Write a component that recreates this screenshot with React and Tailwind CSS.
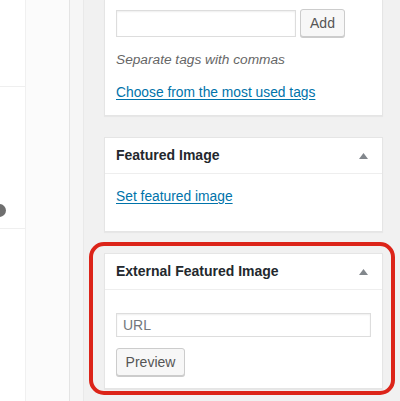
import React from "react";

function Arrow() {
  return (
    <svg width="9" height="6" viewBox="0 0 9 6" className="block">
      <path d="M4.5 0 L9 6 L0 6 Z" fill="#82878c" />
    </svg>
  );
}

export default function App() {
  return (
    <div
      className="relative w-[400px] h-[401px] overflow-hidden flex bg-[#f1f1f1] text-[14px] text-[#23282d]"
      style={{ fontFamily: '"Liberation Sans", Arial, sans-serif' }}
    >
      {/* left panels */}
      <div className="w-[26px] shrink-0 bg-white border-r border-[#f0f0f0] flex flex-col">
        <div className="h-[87px] border-b border-[#efefef]" />
        <div className="h-[142px] border-b border-[#efefef] pt-[117px]">
          <div className="ml-[-7px] w-[13px] h-[13px] rounded-full bg-[#6f6f6f]" />
        </div>
        <div className="flex-1" />
      </div>
      <div className="w-[44px] shrink-0 bg-[#fbfbfb] border-r border-[#e4e4e4]" />
      <div className="w-[14px] shrink-0 bg-[#f6f6f6] border-r border-[#e9e9e9]" />

      {/* main column */}
      <div className="flex-1 pl-[20px] pr-[17px] flex flex-col">
        {/* Tags box */}
        <div className="bg-white border border-t-0 border-[#e5e5e5] shadow-[0_1px_1px_rgba(0,0,0,0.04)] px-[11px] pt-[9px] pb-[12px]">
          <div className="flex items-center gap-[4px]">
            <div className="w-[180px] h-[27px] border border-[#dddddd] bg-white shadow-[inset_0_1px_2px_rgba(0,0,0,0.07)]" />
            <button className="w-[45px] h-[28px] rounded-[3px] border border-[#cccccc] bg-[#f7f7f7] text-[#555555] text-[14px] shadow-[0_1px_0_#cccccc] leading-none">
              Add
            </button>
          </div>
          <div className="mt-[13px] leading-[20px] italic text-[#666666] text-[13.7px]">
            Separate tags with commas
          </div>
          <div className="mt-[12px] leading-[20px]">
            <a className="text-[#0073aa] underline underline-offset-2 text-[13.8px]">
              Choose from the most used tags
            </a>
          </div>
        </div>

        {/* Featured Image box */}
        <div className="mt-[21px] bg-white border border-[#e5e5e5] shadow-[0_1px_1px_rgba(0,0,0,0.04)]">
          <div className="h-[36px] border-b border-[#eeeeee] flex items-center justify-between pl-[11px] pr-[14px]">
            <span className="font-bold text-[14px]">Featured Image</span>
            <Arrow />
          </div>
          <div className="px-[11px] pt-[12px] pb-[24px] leading-[20px]">
            <a className="text-[#0073aa] underline underline-offset-2 text-[13.8px]">
              Set featured image
            </a>
          </div>
        </div>

        {/* External Featured Image box */}
        <div className="mt-[21px] bg-white border border-[#e5e5e5] shadow-[0_1px_1px_rgba(0,0,0,0.04)]">
          <div className="h-[36px] border-b border-[#eeeeee] flex items-center justify-between pl-[11px] pr-[14px]">
            <span className="font-bold text-[14px]">External Featured Image</span>
            <Arrow />
          </div>
          <div className="px-[11px] pt-[23px] pb-[12px]">
            <div className="w-[255px] h-[24px] border border-[#dddddd] bg-white shadow-[inset_0_1px_2px_rgba(0,0,0,0.07)] flex items-center pl-[6px] text-[#72777c] text-[14px]">
              URL
            </div>
            <button className="mt-[11px] w-[69px] h-[28px] rounded-[3px] border border-[#cccccc] bg-[#f7f7f7] text-[#555555] text-[14px] shadow-[0_1px_0_#cccccc] leading-none">
              Preview
            </button>
          </div>
        </div>
      </div>

      {/* red annotation */}
      <div className="absolute left-[89px] top-[242px] w-[306px] h-[153px] border-[4px] border-[#dc2419] rounded-[15px] pointer-events-none" />
    </div>
  );
}
